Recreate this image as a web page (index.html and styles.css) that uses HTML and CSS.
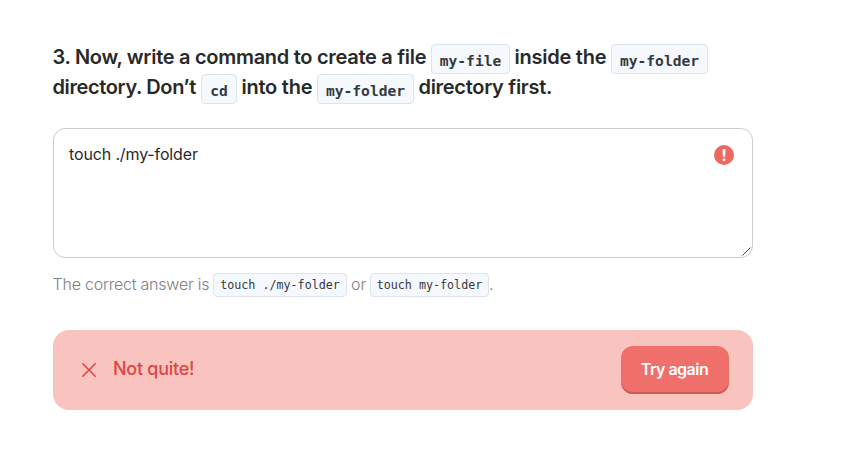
FILE: index.html
```html
<!DOCTYPE html>
<html lang="en">
<head>
<meta charset="utf-8">
<title>Exercise</title>
<link rel="stylesheet" href="styles.css">
</head>
<body>
<main class="exercise">
  <h1 class="question">
    <span class="line"><span class="t1">3. Now, write a command to create a file</span> <code class="chip file">my-file</code> <span class="t2">inside the</span> <code class="chip folder">my-folder</code></span>
    <span class="line"><span class="t3">directory. Don’t</span> <code class="chip cd">cd</code> <span class="t4">into the</span> <code class="chip folder">my-folder</code> <span class="t5">directory first.</span></span>
  </h1>
  <div class="answer">
    <span class="answer-text">touch ./my-folder</span>
    <svg class="alert" viewBox="0 0 20 20"><circle cx="10" cy="10" r="10" fill="#ee6862"/><path d="M8.5 4h3l-.4 8H8.9z" fill="#fff"/><circle cx="10" cy="14.8" r="1.5" fill="#fff"/></svg>
    <svg class="grip" viewBox="0 0 10 10"><path d="M.5 8.5l8-8" stroke="#444"/></svg>
  </div>
  <p class="hint"><span class="h1">The correct answer is</span><code class="chip small s1">touch ./my-folder</code><span class="h2">or</span><code class="chip small s2">touch my-folder</code><span>.</span></p>
  <section class="result">
    <svg class="cross" viewBox="0 0 14 14"><path d="M.8.8l12.4 12.4M13.2.8L.8 13.2" stroke="#df4642" stroke-width="1.6" stroke-linecap="round"/></svg>
    <span class="verdict">Not quite!</span>
    <button class="retry" type="button"><span>Try again</span></button>
  </section>
</main>
</body>
</html>
```
FILE: styles.css
```css
* { box-sizing: border-box; }
body { margin: 0; background: #fff; color: #292929; font-family: Inter, "Liberation Sans", sans-serif; }
.exercise { width: 700px; margin: 44px 0 0 53px; }
.question { margin: 0; font-size: 20px; font-weight: 600; line-height: 26px; }
.line { display: flex; height: 30px; gap: 5px; white-space: nowrap; }
.line > span { flex: none; }
.t1 { width: 373px; letter-spacing: -0.29px; }
.t2 { width: 91px; letter-spacing: -0.25px; }
.t3 { width: 143px; letter-spacing: -0.38px; }
.t4 { width: 70px; letter-spacing: -0.25px; }
.t5 { letter-spacing: -0.3px; }
.t1, .t2, .t3, .t4, .t5 { text-indent: -0.5px; }
.chip { flex: none; height: 30px; border: 1px solid #dce4ee; border-radius: 4px; background: #f5f8fd; color: #343840; font: 700 14.6px/31px "DejaVu Sans Mono", monospace; text-align: center; }
.file { width: 79px; }
.folder { width: 97px; }
.cd { width: 36px; }
.answer { position: relative; display: flex; justify-content: space-between; height: 130px; margin-top: 24px; padding: 16px 18px 0 15px; border: 1px solid #cacccd; border-radius: 12px; }
.answer-text { margin-top: -1px; font-size: 16px; line-height: 20px; letter-spacing: -0.14px; }
.alert { width: 20px; height: 20px; }
.grip { position: absolute; right: 0; bottom: 0; width: 10px; height: 10px; }
.hint { display: flex; height: 24px; margin: 15px 0 0; color: #808080; font-size: 16px; font-weight: 300; line-height: 23px; white-space: nowrap; }
.h1 { width: 160px; letter-spacing: -0.22px; text-indent: -0.5px; }
.h2 { width: 23px; padding-left: 4px; }
.small { height: 24px; font-size: 11.7px; font-weight: 400; line-height: 22px; }
.s1 { width: 134px; }
.s2 { width: 119px; }
.result { display: flex; align-items: center; height: 80px; margin-top: 33px; padding: 0 24px 0 29px; border-radius: 16px; background: #f9c3c0; }
.cross { width: 14px; height: 14px; fill: none; }
.verdict { margin: -2px 0 0 17px; color: #df4642; font-size: 18px; font-weight: 500; line-height: 22px; letter-spacing: -0.27px; }
.retry { width: 108px; height: 48px; margin-left: auto; padding: 0 1px 2px 0; border: 0; border-radius: 12px; background: #ef706a; box-shadow: inset 0 -2px #ce5a53; color: #fff; font: 600 16px/20px Inter, sans-serif; letter-spacing: -0.5px; }
```
